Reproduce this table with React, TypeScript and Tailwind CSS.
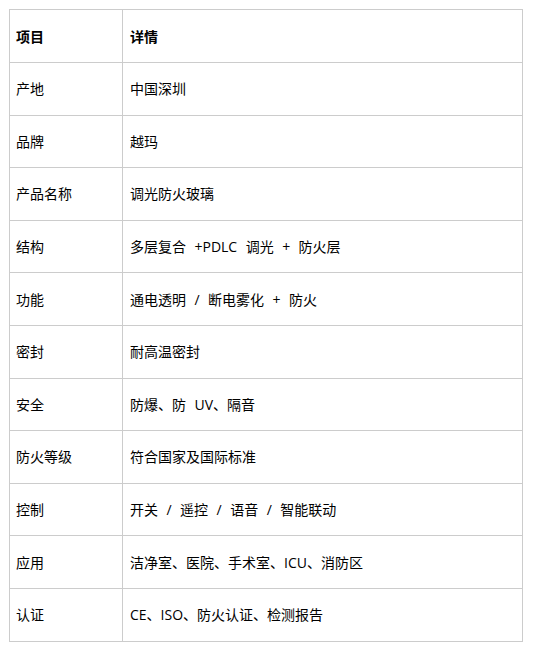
const rows: [string, string][] = [
  ["产地", "中国深圳"],
  ["品牌", "越玛"],
  ["产品名称", "调光防火玻璃"],
  ["结构", "多层复合  +PDLC  调光  +  防火层"],
  ["功能", "通电透明  /  断电雾化  +  防火"],
  ["密封", "耐高温密封"],
  ["安全", "防爆、防  UV、隔音"],
  ["防火等级", "符合国家及国际标准"],
  ["控制", "开关  /  遥控  /  语音  /  智能联动"],
  ["应用", "洁净室、医院、手术室、ICU、消防区"],
  ["认证", "CE、ISO、防火认证、检测报告"],
]

export default function App() {
  return (
    <div
      className="min-h-[645px] bg-white pt-[9px] pl-[9px] text-[14px] text-black"
      style={{ fontFamily: '"Open Sans", "Noto Sans CJK SC", sans-serif' }}
    >
      <table className="w-[514px] border-collapse table-fixed">
        <colgroup>
          <col className="w-[113px]" />
          <col />
        </colgroup>
        <thead>
          <tr className="h-[53px]">
            <th className="border border-[#cccccc] px-[6px] text-left font-bold">项目</th>
            <th className="border border-[#cccccc] px-[7px] text-left font-bold">详情</th>
          </tr>
        </thead>
        <tbody>
          {rows.map(([k, v]) => (
            <tr key={k} className="h-[52.6px]">
              <td className="border border-[#cccccc] px-[6px] whitespace-pre">{k}</td>
              <td className="border border-[#cccccc] px-[7px] whitespace-pre [word-spacing:0.6px]">{v}</td>
            </tr>
          ))}
        </tbody>
      </table>
    </div>
  )
}
